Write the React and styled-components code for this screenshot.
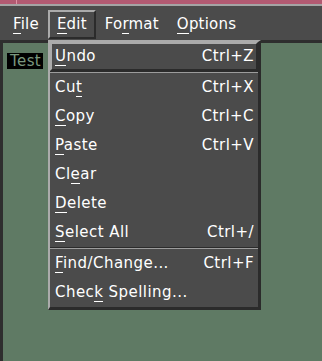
import React from 'react';
import styled, { createGlobalStyle } from 'styled-components';

const GlobalStyle = createGlobalStyle`
  html, body {
    margin: 0;
    padding: 0;
    background: #5f7a64;
  }
  body {
    font-family: "DejaVu Sans", "Liberation Sans", sans-serif;
    font-size: 15px;
  }
`;

const Window = styled.div`
  position: relative;
  width: 322px;
  height: 361px;
  display: flex;
  flex-direction: column;
  overflow: hidden;
`;

const TitleStrip = styled.div`
  height: 4px;
  display: flex;
  background: #b25a72;
  border-bottom: 2px solid #a4a4a4;
`;

const TitleTick = styled.div`
  margin-left: 16px;
  width: 1px;
  background: #e092a6;
`;

const MenuBar = styled.div`
  height: 34px;
  box-sizing: border-box;
  display: flex;
  align-items: flex-start;
  padding: 4px 4px 0 4px;
  background: #4b4b4b;
  letter-spacing: 0.2px;
`;

const BarItem = styled.div`
  box-sizing: border-box;
  height: 29px;
  line-height: 25px;
  padding: 0 7px;
  color: #ffffff;
  border: 2px solid transparent;
  ${({ $active }) =>
    $active &&
    `
    border-color: #ababab #2b2b2b #2b2b2b #ababab;
  `}
`;

const Mnemonic = styled.span`
  border-bottom: 1px solid #ffffff;
`;

const Workspace = styled.div`
  flex: 1;
  background: #5f7a64;
  border-top: 3px solid #2e2e2e;
  border-left: 3px solid #2e2e2e;
  padding: 10px 4px;
`;

const TextLine = styled.div`
  display: flex;
  align-items: center;
  height: 16px;
`;

const Caret = styled.span`
  width: 1px;
  height: 16px;
  margin-right: 1px;
  background: #000;
  box-shadow: 1px 0 0 #000;
`;

const Selected = styled.span`
  display: inline-block;
  height: 16px;
  line-height: 16px;
  padding: 0 2px 0 1px;
  background: #000000;
  color: #7a977e;
  letter-spacing: 0.4px;
`;

const Menu = styled.div`
  position: absolute;
  left: 48px;
  top: 40px;
  width: 213px;
  box-sizing: border-box;
  background: #4b4b4b;
  border-style: solid;
  border-width: 2px 3px 3px 2px;
  border-color: #ababab #2b2b2b #2b2b2b #ababab;
  letter-spacing: 0.45px;
`;

const MenuRow = styled.div`
  box-sizing: border-box;
  height: 29px;
  line-height: 25px;
  padding: 0 3px;
  display: flex;
  justify-content: space-between;
  color: #ffffff;
  border: 2px solid transparent;
  ${({ $active }) =>
    $active &&
    `
    border-color: #ababab #2b2b2b #2b2b2b #ababab;
  `}
`;

const Shortcut = styled.span`
  margin-right: -1px;
`;

const Separator = styled.div`
  height: 1px;
  background: #2b2b2b;
  border-bottom: 1px solid #9c9c9c;
`;

const Label = ({ text, at }) => (
  <span>
    {text.slice(0, at)}
    <Mnemonic>{text[at]}</Mnemonic>
    {text.slice(at + 1)}
  </span>
);

const groups = [
  [{ text: 'Undo', at: 0, key: 'Ctrl+Z', active: true }],
  [
    { text: 'Cut', at: 2, key: 'Ctrl+X' },
    { text: 'Copy', at: 0, key: 'Ctrl+C' },
    { text: 'Paste', at: 0, key: 'Ctrl+V' },
    { text: 'Clear', at: 2 },
    { text: 'Delete', at: 0 },
    { text: 'Select All', at: 0, key: 'Ctrl+/' },
  ],
  [
    { text: 'Find/Change...', at: 0, key: 'Ctrl+F' },
    { text: 'Check Spelling...', at: 4 },
  ],
];

const menus = [
  { text: 'File', at: 0 },
  { text: 'Edit', at: 0, active: true },
  { text: 'Format', at: 2 },
  { text: 'Options', at: 0 },
];

export default function App() {
  return (
    <Window>
      <GlobalStyle />
      <TitleStrip>
        <TitleTick />
      </TitleStrip>
      <MenuBar>
        {menus.map((m) => (
          <BarItem key={m.text} $active={m.active}>
            <Label text={m.text} at={m.at} />
          </BarItem>
        ))}
      </MenuBar>
      <Workspace>
        <TextLine>
          <Caret />
          <Selected>Test</Selected>
        </TextLine>
      </Workspace>
      <Menu>
        {groups.map((items, gi) => (
          <React.Fragment key={gi}>
            {gi > 0 && <Separator />}
            {items.map((it) => (
              <MenuRow key={it.text} $active={it.active}>
                <Label text={it.text} at={it.at} />
                {it.key && <Shortcut>{it.key}</Shortcut>}
              </MenuRow>
            ))}
          </React.Fragment>
        ))}
      </Menu>
    </Window>
  );
}
